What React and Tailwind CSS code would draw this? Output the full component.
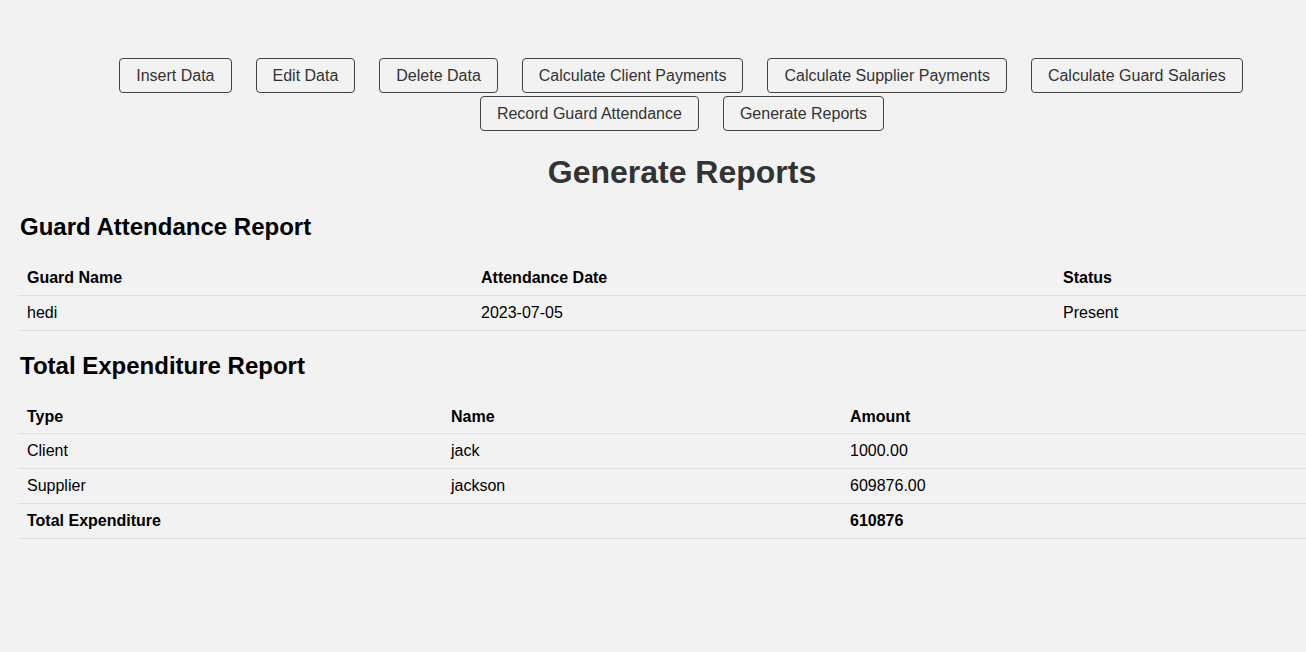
const rowOne = [
  "Insert Data",
  "Edit Data",
  "Delete Data",
  "Calculate Client Payments",
  "Calculate Supplier Payments",
  "Calculate Guard Salaries",
];
const rowTwo = ["Record Guard Attendance", "Generate Reports"];

const attendance = [{ name: "hedi", date: "2023-07-05", status: "Present" }];

const expenditure = [
  { type: "Client", name: "jack", amount: "1000.00" },
  { type: "Supplier", name: "jackson", amount: "609876.00" },
];

function NavButton({ label }) {
  return (
    <button className="h-[35px] rounded-[4px] border border-[#444] bg-[#f2f2f2] px-4 text-base text-[#333]">
      {label}
    </button>
  );
}

export default function App() {
  return (
    <div className="h-[652px] w-[1306px] overflow-hidden bg-[#f2f2f2] font-['Liberation_Sans',Arial,sans-serif] text-black">
      <div className="ml-[18px] w-[1326px]">
        {/* nav */}
        <div className="flex flex-col items-center gap-[3px] pt-[58px]">
          <div className="flex gap-6">
            {rowOne.map((b) => (
              <NavButton key={b} label={b} />
            ))}
          </div>
          <div className="ml-[2px] flex gap-6">
            {rowTwo.map((b) => (
              <NavButton key={b} label={b} />
            ))}
          </div>
        </div>
      </div>

      <div className="ml-[19px] w-[1326px]">
        <h1 className="mt-[23px] text-center text-[32px] leading-[37px] font-bold text-[#333]">
          Generate Reports
        </h1>

        <h2 className="mt-[22px] pl-px text-2xl leading-[28px] font-bold">Guard Attendance Report</h2>
        <table className="mt-[19px] w-full text-left text-base">
          <thead>
            <tr className="h-[35px] border-b border-[#ddd]">
              <th className="w-[454px] px-2 pt-[2px] font-bold">Guard Name</th>
              <th className="w-[582px] px-2 pt-[2px] font-bold">Attendance Date</th>
              <th className="px-2 pt-[2px] font-bold">Status</th>
            </tr>
          </thead>
          <tbody>
            {attendance.map((r) => (
              <tr key={r.name} className="h-[35px] border-b border-[#ddd]">
                <td className="px-2">{r.name}</td>
                <td className="px-2">{r.date}</td>
                <td className="px-2">{r.status}</td>
              </tr>
            ))}
          </tbody>
        </table>

        <h2 className="mt-[21px] pl-px text-2xl leading-[28px] font-bold">Total Expenditure Report</h2>
        <table className="mt-[19px] w-full text-left text-base">
          <thead>
            <tr className="h-[35px] border-b border-[#ddd]">
              <th className="w-[424px] px-2 pt-[2px] font-bold">Type</th>
              <th className="w-[399px] px-2 pt-[2px] font-bold">Name</th>
              <th className="px-2 pt-[2px] font-bold">Amount</th>
            </tr>
          </thead>
          <tbody>
            {expenditure.map((r) => (
              <tr key={r.type} className="h-[35px] border-b border-[#ddd]">
                <td className="px-2">{r.type}</td>
                <td className="px-2">{r.name}</td>
                <td className="px-2">{r.amount}</td>
              </tr>
            ))}
            <tr className="h-[35px] border-b border-[#ddd]">
              <td className="px-2 font-bold">Total Expenditure</td>
              <td className="px-2"></td>
              <td className="px-2 font-bold">610876</td>
            </tr>
          </tbody>
        </table>
      </div>
    </div>
  );
}
